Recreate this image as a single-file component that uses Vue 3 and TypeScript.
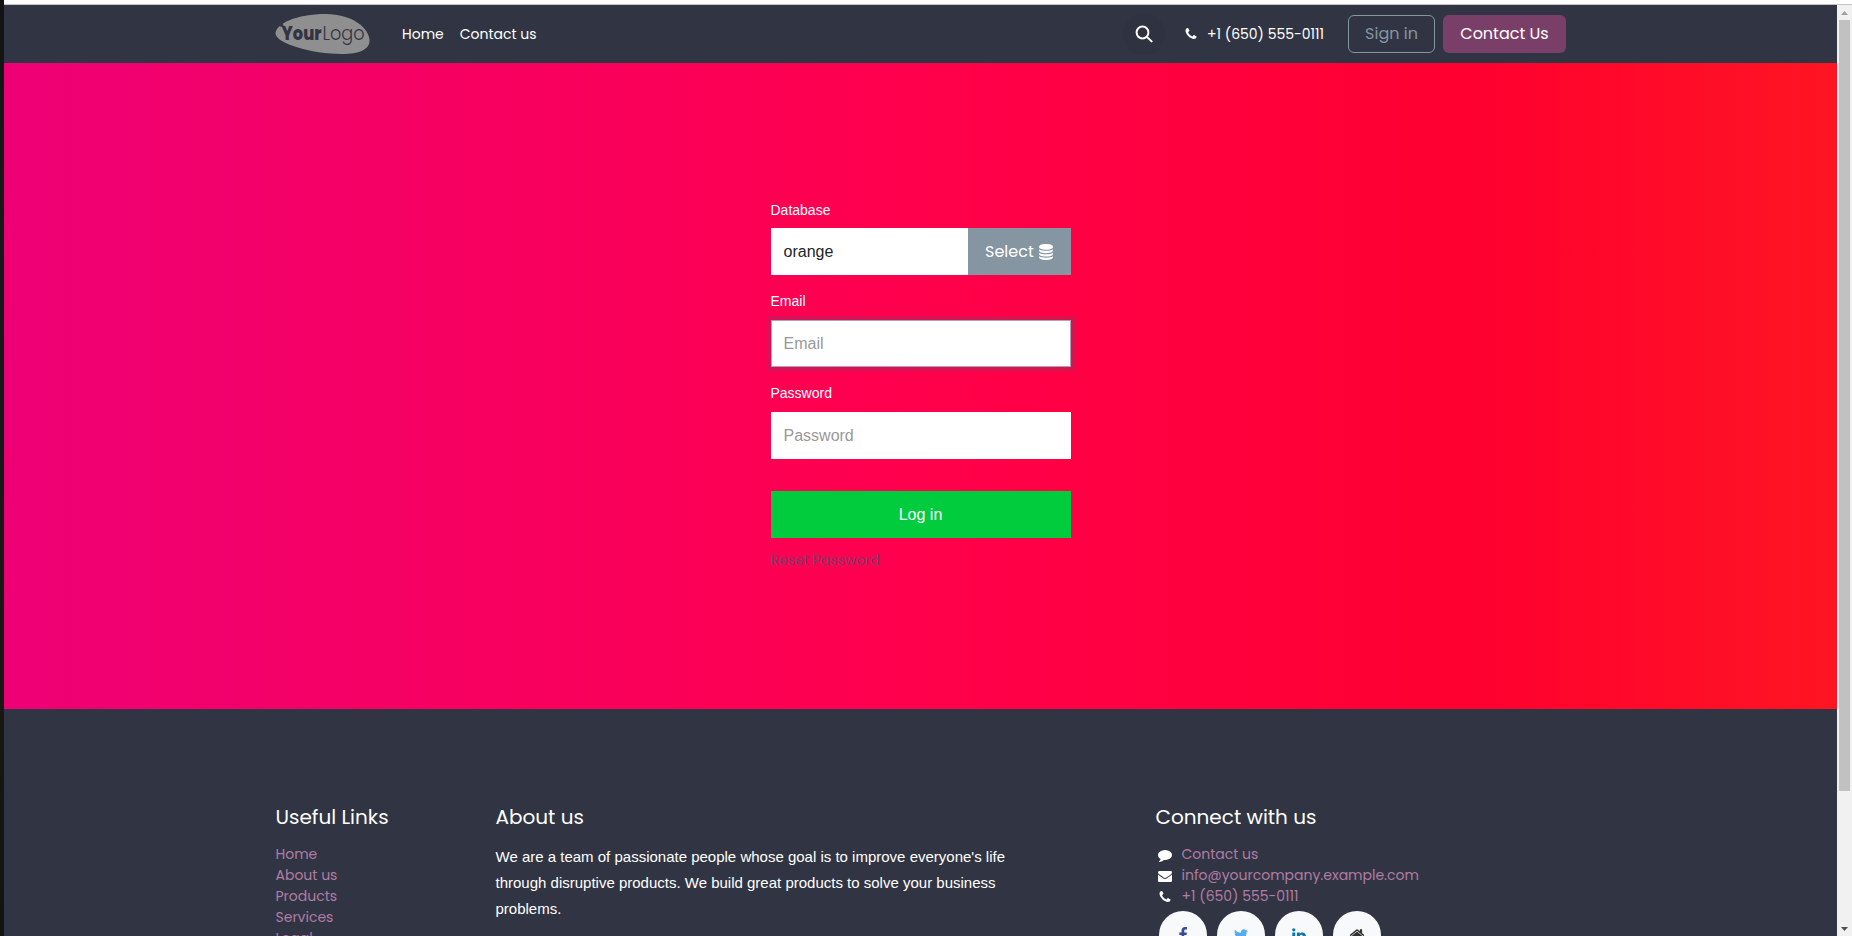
<script setup lang="ts">
const icons = {
  phone: 'M1600 1240q0 27-10 70.5t-21 68.5q-21 50-122 106-94 51-186 51-27 0-53-3.5t-57.5-12.5-47-14.5-55.5-20.5-49-18q-98-35-175-83-127-79-264-216t-216-264q-48-77-83-175-3-9-18-49t-20.5-55.5-14.5-47-12.5-57.5-3.5-53q0-92 51-186 56-101 106-122 25-11 68.5-21t70.5-10q14 0 21 3 18 6 53 76 11 19 30 54t35 63.5 31 53.5q3 4 17.5 25t21.5 35.5 7 28.5q0 20-28.5 50t-62 55-62 53-28.5 46q0 9 5 22.5t8.5 20.5 14 24 11.5 19q76 137 174 235t235 174q2 1 19 11.5t24 14 20.5 8.5 22.5 5q18 0 46-28.5t53-62 55-62 50-28.5q14 0 28.5 7t35.5 21.5 25 17.5q25 15 53.5 31t63.5 35 54 30q70 35 76 53 3 7 3 21z',
  comment: 'M1792 896q0 174-120 321.5t-326 233-450 85.5q-70 0-145-8-198 175-460 242-49 14-114 22-17 2-30.5-9t-17.5-29v-1q-3-4-.5-12t2-10 4.5-9.5l6-9 7-8.5 8-9q7-8 31-34.5t34.5-38 31-39.5 32.5-51 27-59 26-76q-157-89-247.5-220t-90.5-281q0-130 71-248.5t191-204.5 286-136.5 348-50.5q244 0 450 85.5t326 233 120 321.5z',
  envelope: 'M1792 710v794q0 66-47 113t-113 47h-1472q-66 0-113-47t-47-113v-794q44 49 101 87 362 246 497 345 57 42 92.5 65.5t94.5 48 110 24.5h2q51 0 110-24.5t94.5-48 92.5-65.5q170-123 498-345 57-39 100-87zm0-294q0 79-49 151t-122 123q-376 261-468 325-10 7-42.5 31t-54 38.5-52 32.5-57.5 27-50 9h-2q-23 0-50-9t-57.5-27-52-32.5-54-38.5-42.5-31q-91-64-262-182.5t-205-142.5q-62-42-117-115.5t-55-136.5q0-78 41.5-130t118.5-52h1472q65 0 112.5 47t47.5 113z',
  database: 'M896 768q237 0 443-43t325-127v170q0 69-103 128t-280 93.5-385 34.5-385-34.5-280-93.5-103-128v-170q119 84 325 127t443 43zm0 768q237 0 443-43t325-127v170q0 69-103 128t-280 93.5-385 34.5-385-34.5-280-93.5-103-128v-170q119 84 325 127t443 43zm0-384q237 0 443-43t325-127v170q0 69-103 128t-280 93.5-385 34.5-385-34.5-280-93.5-103-128v-170q119 84 325 127t443 43zm0-1152q208 0 385 34.5t280 93.5 103 128v128q0 69-103 128t-280 93.5-385 34.5-385-34.5-280-93.5-103-128v-128q0-69 103-128t280-93.5 385-34.5z',
  facebook: 'M1343 12v264h-157q-86 0-116 36t-30 108v189h293l-39 296h-254v759h-306v-759h-255v-296h255v-218q0-186 104-288.5t277-102.5q147 0 228 12z',
  twitter: 'M1684 408q-67 98-162 167 1 14 1 42 0 130-38 259.5t-115.5 248.5-184.5 210.5-258 146-323 54.5q-271 0-496-145 35 4 78 4 225 0 401-138-105-2-188-64.5t-114-159.5q33 5 61 5 43 0 85-11-112-23-185.5-111.5t-73.5-205.5v-4q68 38 146 41-66-44-105-115t-39-154q0-88 44-163 121 149 294.5 238.5t371.5 99.5q-8-38-8-74 0-134 94.5-228.5t228.5-94.5q140 0 236 102 109-21 205-78-37 115-142 178 93-10 186-50z',
  linkedin: 'M477 625v991h-330v-991h330zm21-306q1 73-50.5 122t-135.5 49h-2q-82 0-132-49t-50-122q0-74 51.5-122.5t134.5-48.5 133 48.5 51 122.5zm1166 729v568h-329v-530q0-105-40.5-164.5t-126.5-59.5q-63 0-105.5 34.5t-63.5 85.5q-11 30-11 81v553h-329q2-399 2-647t-1-296l-1-48h329v144h-2q20-32 41-56t56.5-52 87-43.5 114.5-15.5q171 0 275 113.5t104 332.5z',
  home: 'M1472 992v480q0 26-19 45t-45 19h-384v-384h-256v384h-384q-26 0-45-19t-19-45v-480q0-1 .5-3t.5-3l575-474 575 474q1 2 1 6zm223-69l-62 74q-8 9-21 11h-3q-13 0-21-7l-692-577-692 577q-12 8-24 7-13-2-21-11l-62-74q-8-10-7-23.5t11-21.5l719-599q32-26 76-26t76 26l244 204v-195q0-14 9-23t23-9h192q14 0 23 9t9 23v408l219 182q10 8 11 21.5t-7 23.5z',
}

const links: string[] = ['Home', 'About us', 'Products', 'Services', 'Legal']

const contacts = [
  { label: 'Contact us', icon: icons.comment },
  { label: 'info@yourcompany.example.com', icon: icons.envelope },
  { label: '+1 (650) 555-0111', icon: icons.phone },
]

const socials = [
  { name: 'facebook', icon: icons.facebook },
  { name: 'twitter', icon: icons.twitter },
  { name: 'linkedin', icon: icons.linkedin },
  { name: 'website', icon: icons.home },
]
</script>

<template>
  <div class="screen">
    <div class="edge"></div>
    <div class="window">
      <div class="topline"></div>
      <div class="body">
        <div class="page">
          <header class="header">
            <svg class="logo" viewBox="0 0 95 40">
              <path d="M0.500 19.500C0.500 10 21 0 51 0C77 0 94.500 14 94.500 27C94.500 35.500 84 40 67 40C36 40 0.500 29 0.500 19.500Z" fill="#8f8f8f" />
              <path d="M4 10.500L8 10L9 13L5 12.500Z" fill="#313543" />
              <text x="6.500" y="25.500" class="your" textLength="40" lengthAdjust="spacingAndGlyphs">Your</text>
              <text x="47.500" y="25.500" class="word" textLength="42" lengthAdjust="spacingAndGlyphs">Logo</text>
            </svg>
            <nav class="nav">
              <a>Home</a>
              <a>Contact us</a>
            </nav>
            <div class="search">
              <svg viewBox="0 0 18 18"><circle cx="7.500" cy="7.500" r="5.900" /><path d="M11.900 11.900L16.600 16.400" /></svg>
            </div>
            <div class="tel">
              <svg class="fa" viewBox="0 0 1792 1792"><path :d="icons.phone" /></svg>
              <span>+1 (650) 555-0111</span>
            </div>
            <button class="btn outline">Sign in</button>
            <button class="btn primary">Contact Us</button>
          </header>

          <main class="main">
            <form class="login" @submit.prevent>
              <label class="first">Database</label>
              <div class="group">
                <input type="text" value="orange" />
                <button type="button" class="select">
                  <span>Select</span>
                  <svg viewBox="0 0 1792 1792"><path :d="icons.database" /></svg>
                </button>
              </div>
              <label>Email</label>
              <input class="focused" type="text" placeholder="Email" />
              <label>Password</label>
              <input type="password" placeholder="Password" />
              <button type="button" class="submit">Log in</button>
              <a class="reset">Reset Password</a>
            </form>
          </main>

          <footer class="footer">
            <section class="col links">
              <h5>Useful Links</h5>
              <a v-for="l in links" :key="l">{{ l }}</a>
            </section>
            <section class="col about">
              <h5>About us</h5>
              <p>We are a team of passionate people whose goal is to improve everyone's life through disruptive products. We build great products to solve your business problems.</p>
            </section>
            <section class="col connect">
              <h5>Connect with us</h5>
              <div v-for="c in contacts" :key="c.label" class="contact">
                <svg class="fa" viewBox="0 0 1792 1792"><path :d="c.icon" /></svg>
                <a>{{ c.label }}</a>
              </div>
              <div class="socials">
                <span v-for="s in socials" :key="s.name" class="circle" :class="s.name">
                  <svg viewBox="0 0 1792 1792"><path :d="s.icon" /></svg>
                </span>
              </div>
            </section>
          </footer>
        </div>
        <div class="scrollbar">
          <svg class="arrow" viewBox="0 0 7 4"><path d="M0 4L3.500 0L7 4Z" fill="#a0a0a0" /></svg>
          <div class="thumb"></div>
          <svg class="arrow down" viewBox="0 0 7 4"><path d="M0 0L3.500 4L7 0Z" fill="#505050" /></svg>
        </div>
      </div>
    </div>
  </div>
</template>

<style>
body { margin: 0; overflow: hidden; }
</style>

<style scoped>
* { box-sizing: border-box; }
.screen {
  display: flex;
  width: 1852px;
  height: 936px;
  overflow: hidden;
  font-family: Poppins, Inter, "Liberation Sans", sans-serif;
  font-size: 14px;
  line-height: 21px;
}
.edge { width: 4px; background: linear-gradient(#131313, #181818 20%, #15191a 45%, #191815 60%, #131412); }
.window { flex: 1; display: flex; flex-direction: column; min-width: 0; }
.topline { height: 5px; background: #fff; border-bottom: 1px solid #c4c4c4; }
.body { flex: 1; display: flex; min-height: 0; }
.page { width: 1833px; display: flex; flex-direction: column; overflow: hidden; background: #313543; }

.header {
  flex: none;
  display: flex;
  align-items: center;
  height: 58px;
  padding: 0 271px 0 271px;
  color: #fff;
}
.logo { width: 95px; height: 40px; display: block; overflow: visible; }
.your { font-family: Poppins, Inter, sans-serif; font-weight: 800; font-size: 20px; fill: #313543; }
.word { font-family: Poppins, Lato, sans-serif; font-weight: 300; font-size: 20px; fill: #313543; }
.nav { display: flex; gap: 16px; margin-left: 32px; }
.search {
  display: flex;
  align-items: center;
  justify-content: center;
  width: 42px;
  height: 42px;
  margin-left: auto;
  border-radius: 50%;
  background: #2f3240;
}
.search svg { width: 18px; height: 18px; fill: none; stroke: #fff; stroke-width: 2; stroke-linecap: round; }
.fa { width: 14px; height: 14px; fill: #fff; flex: none; }
.tel { display: flex; align-items: center; margin: 0 23px 0 18px; width: 142px; white-space: nowrap; }
.tel .fa { margin-left: .5px; }
.tel span { margin-left: 9.500px; }
.btn {
  height: 38px;
  padding: 0;
  border-radius: 6px;
  border: 1px solid transparent;
  font: 400 16px/24px Poppins, Inter, sans-serif;
}
.outline { width: 87px; background: transparent; border-color: #8595a2; color: #8595a2; }
.primary { width: 123px; margin-left: 8px; background: #7a3f69; color: #fff; }

.main {
  flex: none;
  display: flex;
  justify-content: center;
  height: 646px;
  padding-top: 136px;
  background: linear-gradient(90deg, #ee0075 0%, #ff004c 50%, #ff0030 80%, #ff1522 100%);
}
.login {
  display: flex;
  flex-direction: column;
  width: 300px;
  font-family: "Liberation Sans", Arial, sans-serif;
}
label { height: 21px; margin-bottom: 8px; color: #fff; }
.first { padding-top: 1px; }
.group { display: flex; margin-bottom: 16px; }
input {
  width: 300px;
  height: 47px;
  padding: 0 12px;
  border: 1px solid #fff;
  border-radius: 0;
  outline: none;
  margin: 0 0 16px;
  background: #fff;
  color: #212529;
  font: 16px/24px "Liberation Sans", Arial, sans-serif;
}
input::placeholder { color: #999; opacity: 1; }
.group input { width: 197px; margin: 0; }
.focused { border-color: #b99fb4; box-shadow: 0 0 0 4px rgba(122, 63, 105, .3); }
.select {
  display: flex;
  align-items: center;
  width: 103px;
  height: 47px;
  padding: 0 0 0 17.500px;
  border: 0;
  background: #8595a2;
  color: #fff;
  font: 400 16px/24px Poppins, Inter, sans-serif;
}
.select span { width: 53px; text-align: left; }
.select svg { width: 16px; height: 16px; fill: #fff; }
.submit {
  height: 47px;
  margin-top: 16px;
  border: 0;
  background: #00cc3e;
  color: #fff;
  font: 16px/24px "Liberation Sans", Arial, sans-serif;
}
.reset { margin-top: 12px; color: #7a3f69; font-family: Poppins, Inter, sans-serif; }

.footer { flex: 1; display: flex; padding: 96px 0 0 271.500px; color: #fff; white-space: nowrap; }
.col { display: flex; flex-direction: column; flex: none; }
.links { width: 220px; }
.about { width: 660px; }
h5 { margin: 0 0 15px; font-weight: 400; font-size: 20px; line-height: 24px; }
.footer a { color: #b07ca4; height: 21px; }
p { width: 514px; margin: 0; font: 15px/26px "Liberation Sans", Arial, sans-serif; white-space: normal; }
.contact { display: flex; align-items: center; height: 21px; padding-left: 2px; }
.contact a { margin-left: 10px; }
.socials { display: flex; gap: 10px; padding-left: 3.500px; margin-top: 4px; }
.circle {
  display: flex;
  align-items: center;
  justify-content: center;
  width: 48px;
  height: 48px;
  border-radius: 50%;
  background: #f8f9fa;
}
.circle svg { width: 16px; height: 16px; }
.facebook { fill: #3b4a9b; }
.twitter { fill: #55acee; }
.linkedin { fill: #0976b4; }
.website { fill: #333; }

.scrollbar { flex: 1; display: flex; flex-direction: column; align-items: center; background: #f1f1f1; }
.arrow { flex: none; width: 7px; height: 4px; margin-top: 6px; }
.thumb { flex: none; width: 11px; height: 771px; margin-top: 5px; background: #c1c1c1; }
.down { margin-top: auto; margin-bottom: 5px; }
</style>
